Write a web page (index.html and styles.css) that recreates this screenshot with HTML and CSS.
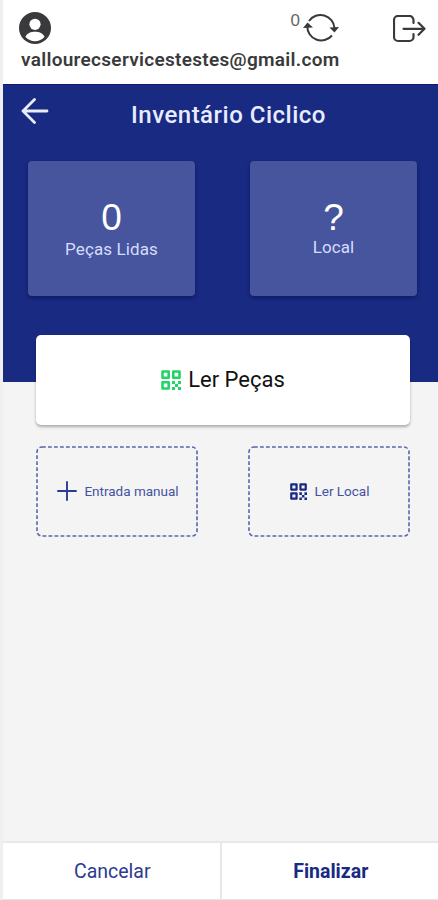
FILE: index.html
```html
<!DOCTYPE html>
<html lang="pt-BR">
<head>
<meta charset="utf-8">
<title>Inventário Ciclico</title>
<link rel="stylesheet" href="styles.css">
</head>
<body>
<svg class="defs" aria-hidden="true">
  <symbol id="qr" viewBox="0 0 20 20">
    <path fill="none" stroke="currentColor" stroke-width="2.6" stroke-linejoin="round" d="M1.500 1.500h6.200v6.200H1.500zM12.300 1.500h6.200v6.200h-6.200zM1.500 12.300h6.200v6.200H1.500z"/>
    <path fill="currentColor" d="M11 11h3v3h-3zM14 14h3v3h-3zM17 11h3v3h-3zM11 17h3v3h-3zM17 17h3v3h-3z"/>
  </symbol>
</svg>
<div class="app">
  <header class="header">
    <div class="icons">
      <svg class="user" viewBox="0 0 32 32"><circle cx="16" cy="16" r="16" fill="#3a3a3c"/><circle cx="16" cy="12.300" r="5.600" fill="#fff"/><path fill="#fff" d="M6.400 24.800c2-3.800 5.700-5 9.600-5s7.600 1.200 9.600 5c-2.500 3-5.800 4.400-9.600 4.400s-7.100-1.400-9.600-4.400z"/></svg>
      <span class="count">0</span>
      <svg class="sync" viewBox="0 0 36 30"><g fill="none" stroke="#3a3a3c" stroke-width="2"><path d="M6 8A14 14 0 0 1 31.500 15"/><path d="M29 22.500A14 14 0 0 1 4.300 13"/></g><path fill="#3a3a3c" d="M0 15 4.500 9.500 10 14.500zM26.500 14.500l9.500-.5-4.500 5.500z"/></svg>
      <svg class="exit" viewBox="0 0 33 28" fill="none" stroke="#3a3a3c" stroke-width="2.200" stroke-linecap="round" stroke-linejoin="round"><path d="M20.500 8V5a4 4 0 0 0-4-4H5a4 4 0 0 0-4 4v17a4 4 0 0 0 4 4h11.500a4 4 0 0 0 4-4v-3M10.500 13.800h21M25.500 7.800l6 6-6 6"/></svg>
    </div>
    <div class="email"><span>vallourecservicestestes@gmail.com</span></div>
  </header>
  <section class="hero">
    <div class="titlebar">
      <svg class="back" viewBox="0 0 28 26" fill="none" stroke="#e8ecff" stroke-width="2.800" stroke-linecap="round" stroke-linejoin="round"><path d="M26 13H2M13.500 1.500 2 13l11.500 11.500"/></svg>
      <h1>Inventário Ciclico</h1>
    </div>
    <div class="stats">
      <div class="stat"><b>0</b><span>Peças Lidas</span></div>
      <div class="stat stat-local"><b>?</b><span>Local</span></div>
    </div>
  </section>
  <main class="main">
    <button class="read"><svg><use href="#qr"/></svg><span>Ler Peças</span></button>
    <div class="actions">
      <button class="action manual"><svg class="outline"><rect x="1" y="1" width="160" height="89" rx="5"/></svg><svg class="icon" viewBox="0 0 20 20"><path d="M10 1v18M1 10h18" stroke="currentColor" stroke-width="1.900" stroke-linecap="round"/></svg><span>Entrada manual</span></button>
      <button class="action local"><svg class="outline"><rect x="1" y="1" width="160" height="89" rx="5"/></svg><svg class="icon"><use href="#qr"/></svg><span>Ler Local</span></button>
    </div>
  </main>
  <footer class="footer">
    <button class="cancel">Cancelar</button>
    <button class="finish">Finalizar</button>
  </footer>
</div>
</body>
</html>
```
FILE: styles.css
```css
* { box-sizing: border-box; }
body { margin: 0; background: #efeff0; font-family: Roboto, sans-serif; }
button { font: inherit; margin: 0; padding: 0; white-space: nowrap; }
svg { display: block; flex: none; }
.defs { display: none; }
.app { height: 900px; margin-left: 3px; display: flex; flex-direction: column; background: #f4f4f4; }
.header { height: 84px; background: #fff; padding-top: 12px; }
.icons { display: flex; height: 34px; padding: 0 12px 0 16px; }
.user { width: 32px; height: 32px; }
.count { margin-left: auto; margin-right: 3px; font: 17px/17px "Liberation Sans", sans-serif; color: #666; }
.sync { width: 36px; height: 30px; margin-top: 1px; }
.exit { width: 33px; height: 28px; margin: 3px 0 0 54px; }
.email { padding-left: 18px; margin-top: 2px; font-size: 19px; line-height: 24px; font-weight: 600; letter-spacing: .3px; color: #3a3a3c; }
.hero { height: 298px; background: #192a83; border-top: 1px solid #0d1b70; }
.titlebar { height: 75px; display: flex; padding: 13px 18px 0; }
.back { width: 28px; height: 26px; }
h1 { margin: 3px 0 0 82px; font-size: 24px; line-height: 28px; font-weight: 500; letter-spacing: .5px; color: #e8ecff; white-space: nowrap; }
.stats { display: flex; justify-content: space-between; padding: 0 21px 0 25px; }
.stat { width: 167px; height: 135px; margin-top: 1px; padding-top: 37px; background: #46559d; border-radius: 4px; box-shadow: 0 2px 4px rgba(0, 0, 40, .4); display: flex; flex-direction: column; align-items: center; }
.stat b { font: 37px/40px "Liberation Sans", sans-serif; color: #fff; }
.stat span { font-size: 17px; line-height: 22px; letter-spacing: .1px; color: #d5dcff; }
.stat-local span { margin-top: -2px; }
.main { flex: 1; padding: 0 28px 0 33px; margin-top: -47px; }
.read { width: 100%; height: 90px; border: 0; border-radius: 5px; background: #fff; box-shadow: 0 2px 3px rgba(0, 0, 0, .3); color: #111; font-size: 22px; display: flex; align-items: center; justify-content: center; gap: 7px; padding-bottom: 1px; }
.read svg { width: 20px; height: 20px; color: #23d367; }
.actions { margin-top: 21px; display: flex; justify-content: space-between; }
.action { position: relative; width: 162px; height: 91px; border: 0; background: transparent; color: #4552a0; font-size: 13.5px; display: flex; align-items: center; justify-content: center; gap: 7px; padding: 0 0 1px 2px; }
.outline { position: absolute; inset: 0; width: 162px; height: 91px; fill: none; stroke: #5a66aa; stroke-width: 1.600; stroke-dasharray: 3.800 2.200; }
.manual .icon { width: 20px; height: 20px; color: #2c3c92; }
.local .icon { width: 17px; height: 17px; color: #192a83; }
.footer { height: 59px; display: flex; border-top: 2px solid #e8e8e8; border-bottom: 1px solid #e4e4e4; background: #fff; }
.footer button { flex: 1; border: 0; background: #fff; color: #2c3a91; font-size: 19.5px; padding-left: 2px; }
.footer .finish { border-left: 2px solid #e8e8e8; color: #192a83; font-weight: 700; }
```
